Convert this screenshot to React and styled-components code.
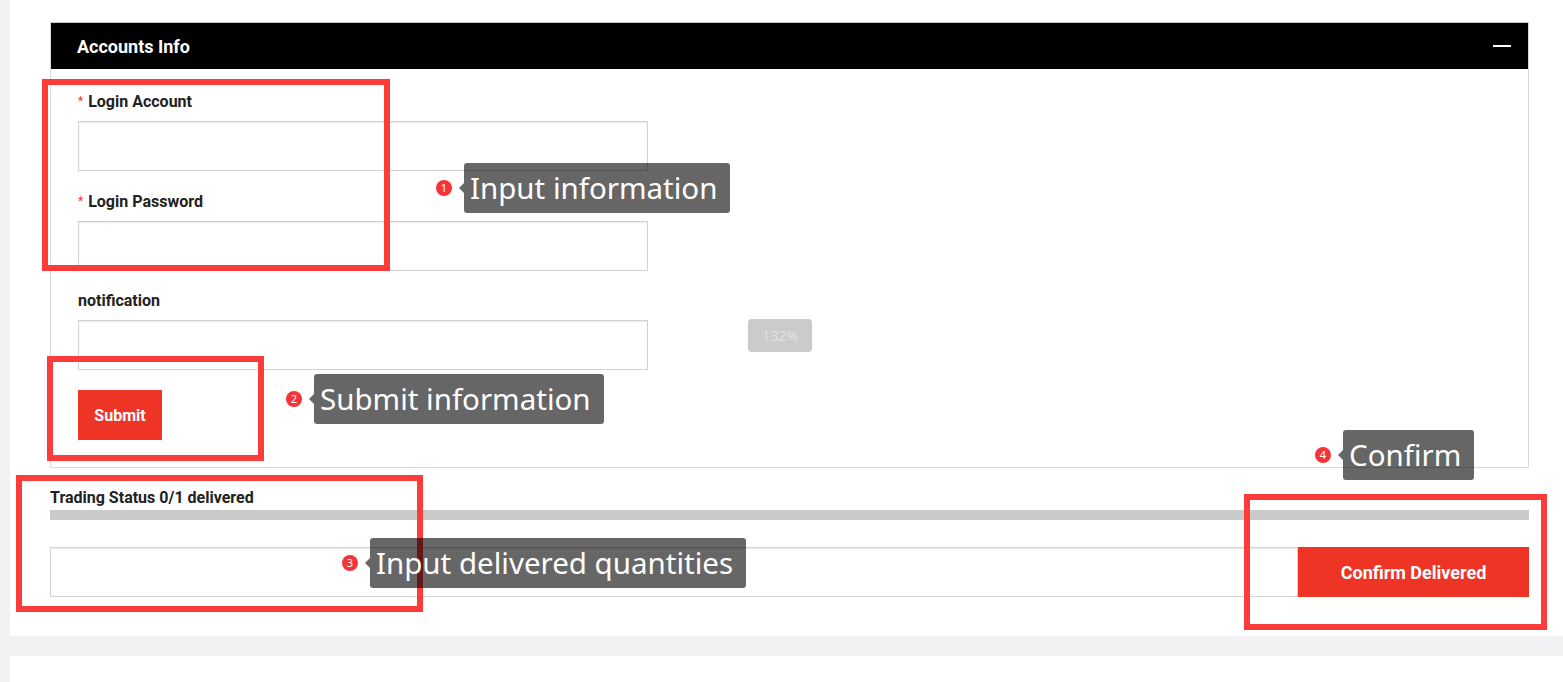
import React from 'react';
import styled, { createGlobalStyle } from 'styled-components';

var GlobalStyle = createGlobalStyle`
    html, body {
        margin: 0;
        padding: 0;
        background: #f2f2f4;
        font-family: Roboto, "Liberation Sans", Arial, sans-serif;
        overflow: hidden;
    }
    * { box-sizing: border-box; }
`

var Page = styled.div`
    position: relative;
    width: 1563px;
    height: 682px;
    padding-left: 10px;
    display: flex;
    flex-direction: column;
    gap: 20px;
`

var Card = styled.div`
    background: #fff;
    padding: ${p => p.$empty ? '0' : '22px 34px 39px 40px'};
    flex: ${p => p.$empty ? '1' : 'none'};
`

var Panel = styled.div`
    border: 1px solid #d9d9d9;
    border-top-color: #c8c8c8;
`

var PanelHeader = styled.div`
    height: 46px;
    background: #000;
    color: #fff;
    display: flex;
    align-items: center;
    justify-content: space-between;
    padding: 0 17px 0 26px;
    font-size: 18px;
    font-weight: 700;
`

var Collapse = styled.span`
    width: 18px;
    height: 2px;
    background: #fff;
`

var PanelBody = styled.div`
    padding: 22px 27px 27px;
    display: flex;
    flex-direction: column;
    align-items: flex-start;
    gap: 20px;
`

var Field = styled.div`
    display: flex;
    flex-direction: column;
    gap: 9px;
`

var Label = styled.label`
    font-size: 16px;
    font-weight: 700;
    line-height: 20px;
    color: #222;

    &::before {
        content: ${p => p.$required ? '"*"' : 'none'};
        color: #f0352a;
        font-weight: 400;
        font-size: 12px;
        margin-right: 5px;
        vertical-align: 2px;
    }
`

var TextInput = styled.input`
    width: ${p => p.$wide ? 'auto' : '570px'};
    flex: ${p => p.$wide ? '1' : 'none'};
    height: 50px;
    border: 1px solid #d2d2d2;
    box-shadow: inset 0 1px 1px rgba(0, 0, 0, 0.08);
    padding: 0 12px;
    font-size: 14px;
    outline: none;
`

var RedButton = styled.button`
    height: 50px;
    width: ${p => p.$width};
    background: #ee3424;
    color: #fff;
    border: none;
    font-family: inherit;
    font-size: ${p => p.$size};
    font-weight: 700;
    cursor: pointer;
`

var StatusLabel = styled.div`
    margin-top: 20px;
    font-size: 16px;
    font-weight: 700;
    line-height: 20px;
    color: #222;
`

var ProgressTrack = styled.div`
    margin-top: 2px;
    height: 10px;
    background: #cacaca;
`

var DeliverRow = styled.div`
    margin-top: 27px;
    display: flex;
`

var ZoomBadge = styled.div`
    position: absolute;
    left: 748px;
    top: 319px;
    width: 64px;
    height: 33px;
    border-radius: 4px;
    background: #cbcbcb;
    color: #e2e2e2;
    font-size: 14px;
    display: flex;
    align-items: center;
    justify-content: center;
    font-family: "Noto Sans", sans-serif;
`

var Highlight = styled.div`
    position: absolute;
    left: ${p => p.$x}px;
    top: ${p => p.$y}px;
    width: ${p => p.$w}px;
    height: ${p => p.$h}px;
    border: 6px solid #fc3b3b;
    pointer-events: none;
`

var Callout = styled.div`
    position: absolute;
    left: ${p => p.$x}px;
    top: ${p => p.$y}px;
    display: flex;
    align-items: center;
    gap: 12px;
`

var Step = styled.span`
    width: 16px;
    height: 16px;
    border-radius: 50%;
    background: #f5333a;
    color: #fff;
    font-size: 11px;
    line-height: 16px;
    text-align: center;
    font-family: "Noto Sans", sans-serif;
`

var Tip = styled.span`
    position: relative;
    height: 50px;
    padding: 0 13px 0 6px;
    border-radius: 3px;
    background: rgba(0, 0, 0, 0.6);
    color: #fff;
    font-family: "Noto Sans", "Open Sans", sans-serif;
    font-size: 29.5px;
    line-height: 50px;
    white-space: nowrap;

    &::before {
        content: "";
        position: absolute;
        left: -5px;
        top: 20px;
        border-style: solid;
        border-width: 5px 5px 5px 0;
        border-color: transparent rgba(0, 0, 0, 0.6) transparent transparent;
    }
`

var notes = [
    { n: 1, x: 436, y: 163, text: 'Input information' },
    { n: 2, x: 286, y: 374, text: 'Submit information' },
    { n: 3, x: 342, y: 538, text: 'Input delivered quantities' },
    { n: 4, x: 1315, y: 430, text: 'Confirm' },
];

var boxes = [
    { x: 42, y: 79, w: 348, h: 192 },
    { x: 47, y: 356, w: 217, h: 105 },
    { x: 16, y: 475, w: 407, h: 137 },
    { x: 1244, y: 494, w: 303, h: 136 },
];

export default function App() {
    return (
        <Page>
            <GlobalStyle />
            <Card>
                <Panel>
                    <PanelHeader>
                        <span>Accounts Info</span>
                        <Collapse />
                    </PanelHeader>
                    <PanelBody>
                        <Field>
                            <Label $required>Login Account</Label>
                            <TextInput />
                        </Field>
                        <Field>
                            <Label $required>Login Password</Label>
                            <TextInput type="password" />
                        </Field>
                        <Field>
                            <Label>notification</Label>
                            <TextInput />
                        </Field>
                        <RedButton $width="84px" $size="16px">Submit</RedButton>
                    </PanelBody>
                </Panel>
                <StatusLabel>Trading Status 0/1 delivered</StatusLabel>
                <ProgressTrack />
                <DeliverRow>
                    <TextInput $wide />
                    <RedButton $width="231px" $size="18px">Confirm Delivered</RedButton>
                </DeliverRow>
            </Card>
            <Card $empty />

            <ZoomBadge>132%</ZoomBadge>
            {boxes.map((b, i) => (
                <Highlight key={i} $x={b.x} $y={b.y} $w={b.w} $h={b.h} />
            ))}
            {notes.map(note => (
                <Callout key={note.n} $x={note.x} $y={note.y}>
                    <Step>{note.n}</Step>
                    <Tip>{note.text}</Tip>
                </Callout>
            ))}
        </Page>
    )
}
